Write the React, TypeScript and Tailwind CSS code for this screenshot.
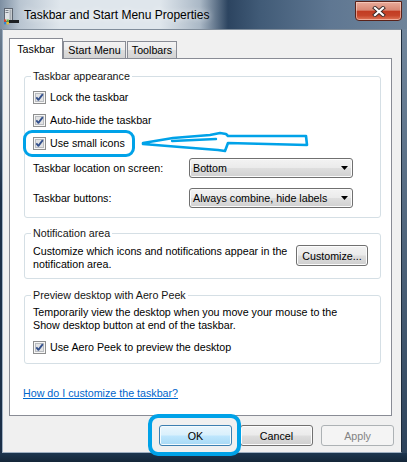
import React from "react";

function Check() {
  return (
    <svg width="13" height="13" viewBox="0 0 13 13" className="shrink-0">
      <rect x="0.5" y="0.5" width="12" height="12" fill="#f6f6f6" stroke="#8e8f8f" />
      <rect x="2.5" y="2.5" width="8" height="8" fill="#e2e3e4" stroke="#b9bcc0" />
      <path d="M3.3 6.4 L5.4 8.9 L9.8 3.1" fill="none" stroke="#33508c" strokeWidth="1.8" strokeLinejoin="round" />
    </svg>
  );
}

function CheckRow({ label }: { label: string }) {
  return (
    <div className="flex h-[16px] items-center gap-[4px] leading-[16px]">
      <Check />
      <span className="whitespace-nowrap">{label}</span>
    </div>
  );
}

function Select({ value }: { value: string }) {
  return (
    <div className="flex h-[20px] w-[164px] items-center justify-between rounded-[3px] border border-[#707070] bg-[linear-gradient(180deg,#f3f3f3_0%,#ebebeb_48%,#dedede_52%,#d0d0d0_100%)] pl-[3px] pr-[4px] leading-[16px] shadow-[inset_0_0_0_1px_#fbfbfb]">
      <span className="whitespace-nowrap">{value}</span>
      <svg width="7" height="4" viewBox="0 0 7 4">
        <path d="M0 0H7L3.5 4Z" fill="#000" />
      </svg>
    </div>
  );
}

function Btn({ children, kind = "normal", className = "" }: { children: React.ReactNode; kind?: "normal" | "default" | "disabled"; className?: string }) {
  const styles =
    kind === "default"
      ? "border-[#3c7fb1] bg-[linear-gradient(180deg,#eaf6fd_0%,#d9f0fc_48%,#bee6fd_52%,#a7d9f5_100%)] shadow-[inset_0_0_0_1px_#f4fbfe] text-black"
      : kind === "disabled"
      ? "border-[#adb2b5] bg-[#f4f4f4] text-[#838383]"
      : "border-[#707070] bg-[linear-gradient(180deg,#f2f2f2_0%,#ebebeb_48%,#dddddd_52%,#cfcfcf_100%)] shadow-[inset_0_0_0_1px_#fcfcfc] text-black";
  return (
    <div className={`flex h-[21px] items-center justify-center rounded-[3px] border leading-[16px] ${styles} ${className}`}>
      {children}
    </div>
  );
}

function Group({ title, className = "", children }: { title: string; className?: string; children: React.ReactNode }) {
  return (
    <fieldset className={`ml-[14px] w-[357px] rounded-[3px] border border-[#d5dfe5] px-[8px] ${className}`}>
      <legend className="-ml-[2px] px-[2px] leading-[16px] text-[#151515]">{title}</legend>
      {children}
    </fieldset>
  );
}

function TitleIcon() {
  return (
    <svg width="16" height="17" viewBox="0 0 16 17" className="ml-[3px] mt-[8px] shrink-0">
      <rect x="1.5" y="0.5" width="8" height="13" fill="#dfe2e5" stroke="#5d6570" />
      <rect x="6.5" y="1.5" width="2" height="11" fill="#a9afb6" />
      <rect x="2.5" y="2" width="3" height="1" fill="#7b838c" />
      <rect x="2.5" y="4" width="3" height="1" fill="#7b838c" />
      <rect x="6" y="12" width="10" height="3" fill="#1c1f23" />
      <rect x="1" y="11.5" width="2.2" height="2.2" fill="#e5412c" />
      <rect x="3.6" y="11.5" width="2.2" height="2.2" fill="#5fb33a" />
      <rect x="1" y="14.1" width="2.2" height="2.2" fill="#2f86d8" />
      <rect x="3.6" y="14.1" width="2.2" height="2.2" fill="#f3c11c" />
    </svg>
  );
}

function CloseBtn() {
  return (
    <div className="ml-auto mr-[5px] mt-[1px] flex h-[20px] w-[47px] items-center justify-center rounded-b-[4px] border border-[#5a2219] bg-[linear-gradient(180deg,#e9ab9a_0%,#d98874_45%,#c23c22_52%,#c6452a_75%,#e0785a_100%)] shadow-[inset_0_0_0_1px_rgba(255,220,210,0.55)]">
      <svg width="14" height="11" viewBox="0 0 14 11">
        <path d="M3 2 L11 9 M11 2 L3 9" stroke="#3a2a28" strokeWidth="4" strokeLinecap="square" />
        <path d="M3 2 L11 9 M11 2 L3 9" stroke="#ffffff" strokeWidth="2.2" strokeLinecap="square" />
      </svg>
    </div>
  );
}

export default function App() {
  return (
    <div className="relative flex h-[462px] w-[407px] flex-col overflow-hidden bg-[#1a3149] font-['Liberation_Sans',Arial,sans-serif] text-[10.7px] text-black">
      {/* Title bar */}
      <div className="flex h-[29px] shrink-0 items-start bg-[linear-gradient(90deg,#7d8fa2_0px,#b9c5d1_20px,#dfe6ec_60px,#dfe6ec_160px,#aab8c6_200px,#2c4460_228px,#415b77_260px,#5f7792_330px,#6f849a_407px)]">
        <TitleIcon />
        <span className="ml-[5px] mt-[7px] whitespace-nowrap text-[12px] leading-[16px] text-black [text-shadow:0_0_6px_#ffffff]">
          Taskbar and Start Menu Properties
        </span>
        <CloseBtn />
      </div>

      {/* Middle */}
      <div className="flex h-[424px] shrink-0">
        <div className="w-[2px] bg-[linear-gradient(180deg,#6d7f92,#1b2f48_40%)]" />
        <div className="flex flex-1 flex-col border border-b-[#9fb0c2] border-l-[#9fb0c2] border-r-[#1c2b3c] border-t-[#808d9b] bg-[#f0f0f0]">
          {/* Tabs */}
          <div className="ml-[6px] mt-[8px] flex h-[20px] items-end">
            <div className="relative z-10 -mb-px h-[21px] w-[54px] border border-b-0 border-[#898c95] bg-white pt-[2px] text-center leading-[16px]">
              Taskbar
            </div>
            <div className="h-[17px] w-[63px] border border-b-0 border-[#898c95] bg-[linear-gradient(180deg,#f3f3f3_0%,#ebebeb_50%,#dddddd_50%,#d4d4d4_100%)] text-center leading-[16px]">
              Start Menu
            </div>
            <div className="ml-[1px] h-[17px] w-[50px] border border-b-0 border-[#898c95] bg-[linear-gradient(180deg,#f3f3f3_0%,#ebebeb_50%,#dddddd_50%,#d4d4d4_100%)] text-center leading-[16px]">
              Toolbars
            </div>
          </div>

          {/* Panel */}
          <div className="ml-[6px] flex h-[358px] w-[383px] flex-col border border-[#898c95] bg-white">
            <Group title="Taskbar appearance" className="mt-[9px] pb-[9px] pt-[5px]">
              <div className="flex flex-col gap-[7px]">
                <CheckRow label="Lock the taskbar" />
                <CheckRow label="Auto-hide the taskbar" />
                <CheckRow label="Use small icons" />
                <div className="flex h-[20px] items-center">
                  <span className="w-[156px] whitespace-nowrap leading-[16px]">Taskbar location on screen:</span>
                  <Select value="Bottom" />
                </div>
              </div>
              <div className="mt-[10px] flex h-[20px] items-center">
                <span className="w-[156px] whitespace-nowrap leading-[16px]">Taskbar buttons:</span>
                <Select value="Always combine, hide labels" />
              </div>
            </Group>

            <Group title="Notification area" className="mt-[7px] pb-[7px] pt-[4px]">
              <div className="flex items-start justify-between pr-[4px]">
                <p className="whitespace-nowrap leading-[13px]">
                  Customize which icons and notifications appear in the
                  <br />
                  notification area.
                </p>
                <Btn className="w-[72px]">Customize...</Btn>
              </div>
            </Group>

            <Group title="Preview desktop with Aero Peek" className="mt-[8px] pb-[8px] pt-[3px]">
              <p className="whitespace-nowrap leading-[13px]">
                Temporarily view the desktop when you move your mouse to the
                <br />
                Show desktop button at end of the taskbar.
              </p>
              <div className="mt-[7px]">
                <CheckRow label="Use Aero Peek to preview the desktop" />
              </div>
            </Group>

            <div className="ml-[13px] mt-[21px] h-[16px] leading-[16px]">
              <span className="text-[#0066cc] underline">How do I customize the taskbar?</span>
            </div>
          </div>

          {/* Buttons */}
          <div className="mt-[9px] flex justify-end gap-[8px] pr-[7px]">
            <Btn kind="default" className="w-[73px]">OK</Btn>
            <Btn className="w-[73px]">Cancel</Btn>
            <Btn kind="disabled" className="w-[73px]">Apply</Btn>
          </div>
        </div>
        <div className="w-[5px] bg-[linear-gradient(180deg,#72879d,#2d435b)]" />
      </div>
      <div className="h-[9px] shrink-0 bg-[linear-gradient(180deg,#1d3650,#142638)]" />

      {/* Annotations */}
      <div className="pointer-events-none absolute left-[23px] top-[130px] h-[27px] w-[112px] rounded-[9px] border-[3px] border-[#00a2e8]" />
      <svg className="pointer-events-none absolute left-[140px] top-[128px]" width="172" height="26" viewBox="0 0 172 26">
        <path
          d="M3 15 L33 10 L70 7 L80 5 L86 6 L88 8 L166 8 L167 17 L88 15 L85 23 L78 22 L40 19 L3 16 Z"
          fill="none"
          stroke="#00a2e8"
          strokeWidth="2.6"
          strokeLinejoin="round"
        />
        <path d="M32 13 L76 11" stroke="#00a2e8" strokeWidth="2.4" strokeLinecap="round" />
      </svg>
      <div className="pointer-events-none absolute left-[148px] top-[414px] h-[42px] w-[93px] rounded-[10px] border-[4px] border-[#00a2e8]" />
    </div>
  );
}
